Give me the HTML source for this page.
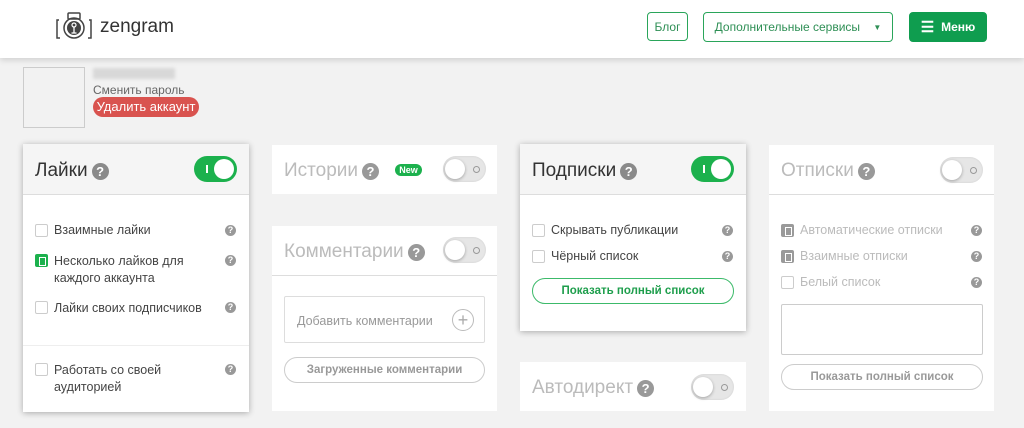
<!DOCTYPE html>
<html><head><meta charset="utf-8"><style>
*{box-sizing:border-box;margin:0;padding:0}
body{width:1024px;height:428px;overflow:hidden;background:#f2f2f2;font-family:"Liberation Sans",Arial,sans-serif;position:relative;color:#444}
.a{position:absolute}
.hdr{left:0;top:0;width:1024px;height:58px;background:#fff;box-shadow:0 2px 6px rgba(0,0,0,.15)}
.btn{position:absolute;border:1px solid #2aa55a;border-radius:4px;color:#2e8f55;font-size:12px;display:flex;align-items:center;justify-content:center}
.card{position:absolute;background:#fff}
.sh{box-shadow:0 1px 6px rgba(0,0,0,.3)}
.head{position:absolute;left:0;top:0;width:100%;height:51px;border-bottom:1px solid #ddd}
.title{position:absolute;left:12px;top:16px;font-size:19px;display:flex;align-items:center}
.q{display:inline-block;width:17px;height:17px;border-radius:50%;background:#8a8a8a;color:#fff;font-size:13px;font-weight:bold;text-align:center;line-height:17px;margin-left:4px}
.qs{position:absolute;width:11px;height:11px;border-radius:50%;background:#999;color:#fff;font-size:9px;font-weight:bold;text-align:center;line-height:11px}
.tg{position:absolute;width:43px;height:26px;border-radius:13px}
.tg.on{background:#1cb14d}
.tg.on::before{content:"";position:absolute;left:12px;top:9px;width:2px;height:8px;background:#fff}
.tg.on::after{content:"";position:absolute;right:3px;top:3px;width:20px;height:20px;border-radius:50%;background:#fff}
.tg.off{background:#e6e6e6;box-shadow:inset 0 0 2px rgba(0,0,0,.1)}
.tg.off::before{content:"";position:absolute;left:2px;top:3px;width:20px;height:20px;border-radius:50%;background:#fff;box-shadow:0 1px 3px rgba(0,0,0,.3)}
.tg.off::after{content:"";position:absolute;right:6px;top:10px;width:5px;height:5px;border-radius:50%;border:1.5px solid #999}
.cb{position:absolute;width:13px;height:13px;border:1px solid #ccc;border-radius:2px;background:#fff}
.cb.g{background:#1cb14d;border-color:#1cb14d}
.cb.g::after,.cb.gr::after{content:"";position:absolute;left:3px;top:2px;width:5px;height:7px;border:1px solid #fff}
.cb.gr{background:#9a9a9a;border-color:#9a9a9a}
.t{position:absolute;font-size:12.5px;color:#444;line-height:17px}
.gr-t{color:#bbb}
.ob{position:absolute;border:1px solid #ccc;border-radius:14px;font-size:11.5px;font-weight:bold;color:#999;display:flex;align-items:center;justify-content:center}
</style></head><body>
<div class="a hdr">
 <svg class="a" style="left:56px;top:11px" width="36" height="30" viewBox="0 0 36 30"><path d="M3 9H1v18h3M33 9h2v18h-3" fill="none" stroke="#444" stroke-width="1.5"/><rect x="12" y="2" width="12" height="6" rx="1" fill="none" stroke="#444" stroke-width="1.5"/><circle cx="18" cy="17" r="10" fill="none" stroke="#444" stroke-width="1.5"/><circle cx="18" cy="17" r="7" fill="#444"/><circle cx="18" cy="14" r="2" fill="none" stroke="#fff" stroke-width="1.2"/><path d="M18 16v6M15.5 22h5" stroke="#fff" stroke-width="1.3"/></svg>
 <div class="a" style="left:100px;top:16px;font-size:19px;color:#333">zengram</div>
 <div class="btn" style="left:647px;top:12px;width:41px;height:29px">Блог</div>
 <div class="btn" style="left:703px;top:12px;width:190px;height:30px">Дополнительные сервисы&nbsp;&nbsp;&nbsp;&nbsp;<span style="font-size:8px">▼</span></div>
 <div class="btn" style="left:909px;top:12px;width:78px;height:30px;background:#0f9d4f;border-color:#0f9d4f;color:#fff;font-weight:bold"><span style="font-size:15px;margin-right:7px">☰</span>Меню</div>
</div>
<div class="a" style="left:23px;top:67px;width:62px;height:61px;border:1px solid #ccc"></div>
<div class="a" style="left:93px;top:68px;width:82px;height:11px;background:#d8d8d8;filter:blur(1.5px)"></div>
<div class="a" style="left:93px;top:83px;font-size:12px;color:#666">Сменить пароль</div>
<div class="a" style="left:93px;top:97px;width:106px;height:20px;border-radius:10px;background:#d9534f;color:#fff;font-size:13px;text-align:center;line-height:20px">Удалить аккаунт</div>

<div class="card sh" style="left:23px;top:144px;width:226px;height:268px">
 <div class="head" style="background:#f5f5f5"></div>
 <div class="title" style="color:#333">Лайки<span class="q">?</span></div>
 <div class="tg on" style="left:171px;top:12px"></div>
 <div class="cb" style="left:12px;top:80px"></div><div class="t" style="left:31px;top:78px">Взаимные лайки</div><div class="qs" style="left:202px;top:81px">?</div>
 <div class="cb g" style="left:12px;top:110px"></div><div class="t" style="left:31px;top:109px">Несколько лайков для<br>каждого аккаунта</div><div class="qs" style="left:202px;top:111px">?</div>
 <div class="cb" style="left:12px;top:157px"></div><div class="t" style="left:31px;top:156px">Лайки своих подписчиков</div><div class="qs" style="left:202px;top:158px">?</div>
 <div class="a" style="left:0;top:201px;width:226px;border-top:1px solid #eee"></div>
 <div class="cb" style="left:12px;top:219px"></div><div class="t" style="left:31px;top:218px">Работать со своей<br>аудиторией</div><div class="qs" style="left:202px;top:220px">?</div>
</div>

<div class="card" style="left:272px;top:145px;width:225px;height:49px">
 <div class="title gr-t" style="top:15px">Истории<span class="q" style="background:#999">?</span></div>
 <div class="a" style="left:123px;top:19px;width:27px;height:12px;border-radius:6px;background:#1cb14d;color:#fff;font-size:9px;font-weight:bold;text-align:center;line-height:12px">New</div>
 <div class="tg off" style="left:171px;top:11px"></div>
</div>

<div class="card" style="left:272px;top:226px;width:225px;height:185px">
 <div class="head" style="height:50px"></div>
 <div class="title gr-t" style="top:15px">Комментарии<span class="q" style="background:#999">?</span></div>
 <div class="tg off" style="left:171px;top:11px"></div>
 <div class="a" style="left:12px;top:70px;width:201px;height:47px;border:1px solid #ddd;border-radius:2px"></div>
 <div class="t" style="left:25px;top:87px;color:#999">Добавить комментарии</div>
 <div class="a" style="left:180px;top:83px;width:22px;height:22px;border:1px solid #bbb;border-radius:50%;color:#aaa;font-size:18px;text-align:center;line-height:20px">+</div>
 <div class="ob" style="left:12px;top:131px;width:201px;height:26px">Загруженные комментарии</div>
</div>

<div class="card sh" style="left:520px;top:144px;width:226px;height:187px">
 <div class="head" style="background:#f5f5f5"></div>
 <div class="title" style="color:#333">Подписки<span class="q">?</span></div>
 <div class="tg on" style="left:171px;top:12px"></div>
 <div class="cb" style="left:12px;top:80px"></div><div class="t" style="left:31px;top:78px">Скрывать публикации</div><div class="qs" style="left:202px;top:81px">?</div>
 <div class="cb" style="left:12px;top:106px"></div><div class="t" style="left:31px;top:104px">Чёрный список</div><div class="qs" style="left:202px;top:107px">?</div>
 <div class="ob" style="left:12px;top:134px;width:202px;height:26px;border-color:#3cba6a;color:#1e9e4c">Показать полный список</div>
</div>

<div class="card" style="left:520px;top:362px;width:226px;height:49px">
 <div class="title gr-t" style="top:15px">Автодирект<span class="q" style="background:#999">?</span></div>
 <div class="tg off" style="left:171px;top:12px"></div>
</div>

<div class="card" style="left:769px;top:145px;width:225px;height:266px">
 <div class="head" style="height:50px"></div>
 <div class="title gr-t" style="top:15px">Отписки<span class="q" style="background:#999">?</span></div>
 <div class="tg off" style="left:171px;top:12px"></div>
 <div class="cb gr" style="left:12px;top:79px"></div><div class="t gr-t" style="left:31px;top:77px">Автоматические отписки</div><div class="qs" style="left:202px;top:80px">?</div>
 <div class="cb gr" style="left:12px;top:105px"></div><div class="t gr-t" style="left:31px;top:103px">Взаимные отписки</div><div class="qs" style="left:202px;top:106px">?</div>
 <div class="cb" style="left:12px;top:131px"></div><div class="t gr-t" style="left:31px;top:129px">Белый список</div><div class="qs" style="left:202px;top:132px">?</div>
 <div class="a" style="left:12px;top:159px;width:202px;height:51px;border:1px solid #ccc;border-radius:2px"></div>
 <div class="ob" style="left:12px;top:219px;width:202px;height:26px">Показать полный список</div>
</div>
</body></html>
